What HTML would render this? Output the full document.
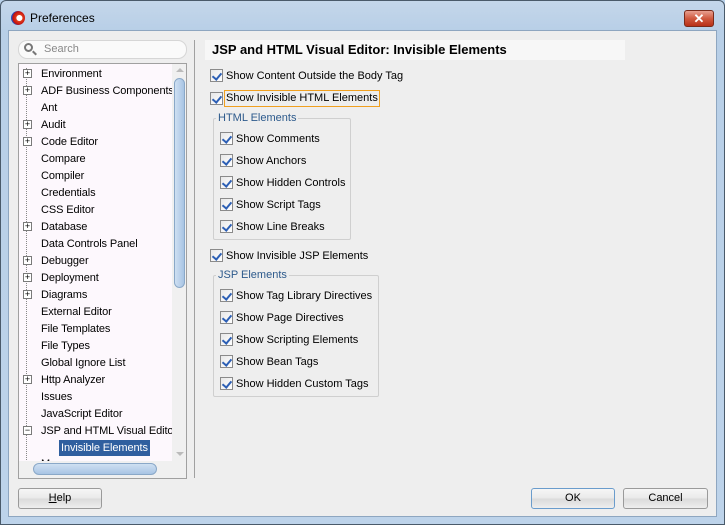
<!DOCTYPE html>
<html><head><style>
*{margin:0;padding:0;box-sizing:border-box}
body{width:725px;height:525px;overflow:hidden;font-family:"Liberation Sans",sans-serif;font-size:11px;color:#000;background:#b9d1ea;position:relative}
.abs{position:absolute}
.win{left:0;top:0;width:725px;height:525px;border:1px solid #4a5a6a;border-radius:6px 6px 0 0;background:linear-gradient(#c4d6ea,#b8cfe7 30px,#bdd3ea)}
.client{left:8px;top:30px;width:709px;height:487px;background:#eeeeee;border:1px solid #8ea6c0}
.tree{left:18px;top:63px;width:169px;height:416px;background:#fdf8fd;border:1px solid #a0a0a0;overflow:hidden}
.ti{position:absolute;left:22px;height:14px;line-height:14px;white-space:nowrap;letter-spacing:-0.1px}
.exp{position:absolute;left:3px;width:9px;height:9px;border:1px solid #7a7a7a;background:#fff;font-size:9px;line-height:7px;text-align:center}
.cb{position:absolute;width:13px;height:13px;border:1px solid #8a8a8a;background:linear-gradient(135deg,#e8e8e8,#fff)}
.cb:after{content:"";position:absolute;left:3px;top:1px;width:4px;height:7px;border:solid #2c5fb5;border-width:0 2px 2px 0;transform:rotate(40deg)}
.lbl{position:absolute;white-space:nowrap;font-size:11px;line-height:14px;margin-top:1px}
.grp{position:absolute;border:1px solid #cfcfcf;border-radius:2px}
.gt{position:absolute;background:#eee;color:#2d5a8c;padding:0 2px;font-size:11px;line-height:12px}
.btn{position:absolute;height:21px;border:1px solid #9a9a9a;border-radius:3px;background:linear-gradient(#f6f6f6,#e9e9e9 50%,#dadada 51%,#eee);text-align:center;line-height:19px;font-size:11px}
</style></head><body>
<div class="abs win"></div>
<div class="abs" style="left:11px;top:11px;width:14px;height:14px;border-radius:50%;background:radial-gradient(circle at 60% 50%,#fff 25%,#e23a1a 30%,#c01010 60%,#2050c0 70%)"></div>
<div class="abs" style="left:30px;top:11px;font-size:12px;line-height:15px">Preferences</div>
<div class="abs" style="left:684px;top:10px;width:30px;height:17px;border:1px solid #7a2a1a;border-radius:3px;background:linear-gradient(#e8a090,#d05a40 50%,#b83018);color:#fff;font-weight:bold;text-align:center;line-height:15px;font-size:13px">✕</div>
<div class="abs client"></div>
<div class="abs" style="left:18px;top:40px;width:169px;height:19px;border:1px solid #d6d6d6;border-radius:9px;background:#fafafa"></div>
<div class="abs" style="left:24px;top:43px;width:9px;height:9px;border:2px solid #777;border-radius:50%"></div>
<div class="abs" style="left:32px;top:52px;width:5px;height:2px;background:#777;transform:rotate(45deg)"></div>
<div class="abs" style="left:44px;top:42px;color:#888;font-size:11px;line-height:14px">Search</div>
<div class="abs tree">
<div class="abs" style="left:7px;top:4px;width:0;height:400px;border-left:1px dotted #888"></div>
<div class="ti" style="top:3px"><span class="exp" style="left:-18px;top:2px">+</span>Environment</div>
<div class="ti" style="top:20px"><span class="exp" style="left:-18px;top:2px">+</span>ADF Business Components</div>
<div class="ti" style="top:37px">Ant</div>
<div class="ti" style="top:54px"><span class="exp" style="left:-18px;top:2px">+</span>Audit</div>
<div class="ti" style="top:71px"><span class="exp" style="left:-18px;top:2px">+</span>Code Editor</div>
<div class="ti" style="top:88px">Compare</div>
<div class="ti" style="top:105px">Compiler</div>
<div class="ti" style="top:122px">Credentials</div>
<div class="ti" style="top:139px">CSS Editor</div>
<div class="ti" style="top:156px"><span class="exp" style="left:-18px;top:2px">+</span>Database</div>
<div class="ti" style="top:173px">Data Controls Panel</div>
<div class="ti" style="top:190px"><span class="exp" style="left:-18px;top:2px">+</span>Debugger</div>
<div class="ti" style="top:207px"><span class="exp" style="left:-18px;top:2px">+</span>Deployment</div>
<div class="ti" style="top:224px"><span class="exp" style="left:-18px;top:2px">+</span>Diagrams</div>
<div class="ti" style="top:241px">External Editor</div>
<div class="ti" style="top:258px">File Templates</div>
<div class="ti" style="top:275px">File Types</div>
<div class="ti" style="top:292px">Global Ignore List</div>
<div class="ti" style="top:309px"><span class="exp" style="left:-18px;top:2px">+</span>Http Analyzer</div>
<div class="ti" style="top:326px">Issues</div>
<div class="ti" style="top:343px">JavaScript Editor</div>
<div class="ti" style="top:360px"><span class="exp" style="left:-18px;top:2px">−</span>JSP and HTML Visual Editor</div>
<div class="ti" style="top:376px;left:40px;background:#2f5f9f;color:#fff;padding:0 2px;height:16px;line-height:16px">Invisible Elements</div>
<div class="ti" style="top:393px">M</div>
<div class="abs" style="left:153px;top:0;width:15px;height:397px;background:#f0f0f0"></div>
<div class="abs" style="left:157px;top:4px;width:0;height:0;border:4px solid transparent;border-bottom-color:#bbb;border-top:0"></div>
<div class="abs" style="left:157px;top:388px;width:0;height:0;border:4px solid transparent;border-top-color:#bbb;border-bottom:0"></div>
<div class="abs" style="left:155px;top:14px;width:11px;height:210px;border:1px solid #8aa8c8;border-radius:6px;background:linear-gradient(90deg,#cfe0f2,#a8c4e4)"></div>
<div class="abs" style="left:0;top:397px;width:168px;height:17px;background:#f0f0f0"></div>
<div class="abs" style="left:14px;top:399px;width:124px;height:12px;border:1px solid #8aa8c8;border-radius:6px;background:linear-gradient(#cfe0f2,#a8c4e4)"></div>
</div>
<div class="abs" style="left:194px;top:40px;width:1px;height:438px;background:#a0a0a0"></div>
<div class="abs" style="left:205px;top:40px;width:420px;height:20px;background:#f7f7f7;font-weight:bold;font-size:13px;line-height:20px;padding-left:7px">JSP and HTML Visual Editor: Invisible Elements</div>
<div class="cb" style="left:210px;top:69px"></div><div class="lbl" style="left:226px;top:68px">Show Content Outside the Body Tag</div>
<div class="cb" style="left:210px;top:92px"></div><div class="lbl" style="left:224px;top:89px;border:1px solid #f0a020;padding:0 1px;line-height:15px">Show Invisible HTML Elements</div>
<div class="grp" style="left:213px;top:118px;width:138px;height:122px"></div><div class="gt" style="left:216px;top:112px">HTML Elements</div>
<div class="cb" style="left:220px;top:132px"></div><div class="lbl" style="left:236px;top:131px">Show Comments</div>
<div class="cb" style="left:220px;top:154px"></div><div class="lbl" style="left:236px;top:153px">Show Anchors</div>
<div class="cb" style="left:220px;top:176px"></div><div class="lbl" style="left:236px;top:175px">Show Hidden Controls</div>
<div class="cb" style="left:220px;top:198px"></div><div class="lbl" style="left:236px;top:197px">Show Script Tags</div>
<div class="cb" style="left:220px;top:220px"></div><div class="lbl" style="left:236px;top:219px">Show Line Breaks</div>
<div class="cb" style="left:210px;top:249px"></div><div class="lbl" style="left:226px;top:248px">Show Invisible JSP Elements</div>
<div class="grp" style="left:213px;top:275px;width:166px;height:122px"></div><div class="gt" style="left:216px;top:269px">JSP Elements</div>
<div class="cb" style="left:220px;top:289px"></div><div class="lbl" style="left:236px;top:288px">Show Tag Library Directives</div>
<div class="cb" style="left:220px;top:311px"></div><div class="lbl" style="left:236px;top:310px">Show Page Directives</div>
<div class="cb" style="left:220px;top:333px"></div><div class="lbl" style="left:236px;top:332px">Show Scripting Elements</div>
<div class="cb" style="left:220px;top:355px"></div><div class="lbl" style="left:236px;top:354px">Show Bean Tags</div>
<div class="cb" style="left:220px;top:377px"></div><div class="lbl" style="left:236px;top:376px">Show Hidden Custom Tags</div>
<div class="btn" style="left:18px;top:488px;width:84px"><u>H</u>elp</div>
<div class="btn" style="left:531px;top:488px;width:84px;border-color:#6a9ccc">OK</div>
<div class="btn" style="left:623px;top:488px;width:85px">Cancel</div>
</body></html>
